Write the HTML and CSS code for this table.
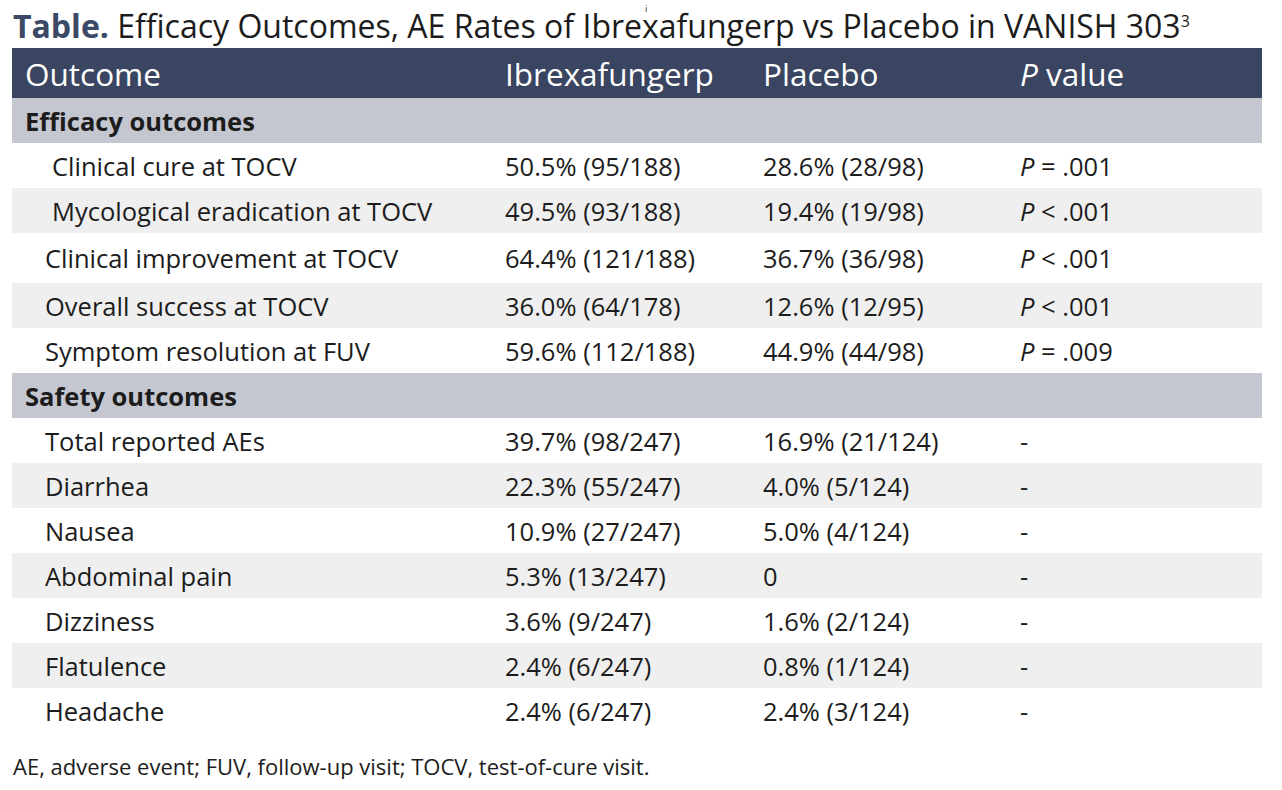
FILE: index.html
```html
<!DOCTYPE html>
<html lang="en">
<head>
<meta charset="utf-8">
<title>Table</title>
<link rel="stylesheet" href="styles.css">
</head>
<body>
<div class="page">
  <h1 class="title"><span class="label">Table.</span> Efficacy Outcomes, AE Rates of Ibre<span class="stray">i</span>xafungerp vs Placebo in VANISH 303<sup>3</sup></h1>
  <table class="data">
    <colgroup>
      <col class="c1"><col class="c2"><col class="c3"><col class="c4">
    </colgroup>
    <thead>
      <tr class="head"><th>Outcome</th><th>Ibrexafungerp</th><th>Placebo</th><th><i>P</i> value</th></tr>
    </thead>
    <tbody>
      <tr class="section"><td colspan="4">Efficacy outcomes</td></tr>
      <tr class="deep"><td>Clinical cure at TOCV</td><td>50.5% (95/188)</td><td>28.6% (28/98)</td><td><i>P</i> = .001</td></tr>
      <tr class="deep alt"><td>Mycological eradication at TOCV</td><td>49.5% (93/188)</td><td>19.4% (19/98)</td><td><i>P</i> &lt; .001</td></tr>
      <tr class="tall"><td>Clinical improvement at TOCV</td><td>64.4% (121/188)</td><td>36.7% (36/98)</td><td><i>P</i> &lt; .001</td></tr>
      <tr class="alt"><td>Overall success at TOCV</td><td>36.0% (64/178)</td><td>12.6% (12/95)</td><td><i>P</i> &lt; .001</td></tr>
      <tr><td>Symptom resolution at FUV</td><td>59.6% (112/188)</td><td>44.9% (44/98)</td><td><i>P</i> = .009</td></tr>
      <tr class="section"><td colspan="4">Safety outcomes</td></tr>
      <tr><td>Total reported AEs</td><td>39.7% (98/247)</td><td>16.9% (21/124)</td><td>-</td></tr>
      <tr class="alt"><td>Diarrhea</td><td>22.3% (55/247)</td><td>4.0% (5/124)</td><td>-</td></tr>
      <tr><td>Nausea</td><td>10.9% (27/247)</td><td>5.0% (4/124)</td><td>-</td></tr>
      <tr class="alt"><td>Abdominal pain</td><td>5.3% (13/247)</td><td>0</td><td>-</td></tr>
      <tr><td>Dizziness</td><td>3.6% (9/247)</td><td>1.6% (2/124)</td><td>-</td></tr>
      <tr class="alt"><td>Flatulence</td><td>2.4% (6/247)</td><td>0.8% (1/124)</td><td>-</td></tr>
      <tr><td>Headache</td><td>2.4% (6/247)</td><td>2.4% (3/124)</td><td>-</td></tr>
    </tbody>
  </table>
  <p class="note">AE, adverse event; FUV, follow-up visit; TOCV, test-of-cure visit.</p>
</div>
</body>
</html>
```
FILE: styles.css
```css
html, body {
  margin: 0;
  padding: 0;
  background: #ffffff;
}
body {
  font-family: "Open Sans", "Liberation Sans", sans-serif;
  color: #1c1c1c;
}
.page {
  width: 1250px;
  padding: 8px 12px 0 12px;
}
.title {
  margin: 0 0 4px 1px;
  font-size: 32px;
  font-weight: 400;
  line-height: 36px;
  color: #1c1c1c;
  white-space: nowrap;
}
.title .label {
  font-weight: 700;
  color: #3b4866;
}
.title sup {
  font-size: 16px;
  vertical-align: 11px;
  line-height: 0;
}
.title .stray {
  display: inline-block;
  position: relative;
  left: 3px;
  top: -26px;
  width: 0;
  font-size: 9px;
  line-height: 0;
}
.data {
  width: 1250px;
  border-collapse: collapse;
  table-layout: fixed;
}
.c1 { width: 480px; }
.c2 { width: 258px; }
.c3 { width: 257px; }
.c4 { width: 255px; }
.data th, .data td {
  padding: 0 0 0 13px;
  text-align: left;
  white-space: nowrap;
  vertical-align: middle;
}
.head th {
  background: #3a4661;
  color: #ffffff;
  font-weight: 400;
  font-size: 31.5px;
  height: 50px;
}
.data td {
  font-size: 25.5px;
  height: 45px;
}
.data tbody tr td:first-child {
  padding-left: 33px;
}
.data tbody tr.deep td:first-child {
  padding-left: 40px;
}
.data tbody tr.section td {
  background: #c4c7d0;
  font-weight: 700;
  padding-left: 13px;
}
.data tr.alt td {
  background: #efefef;
}
.data tr.tall td {
  height: 50px;
}
.note {
  margin: 20px 0 0 1px;
  font-size: 22px;
  line-height: 26px;
}
```
